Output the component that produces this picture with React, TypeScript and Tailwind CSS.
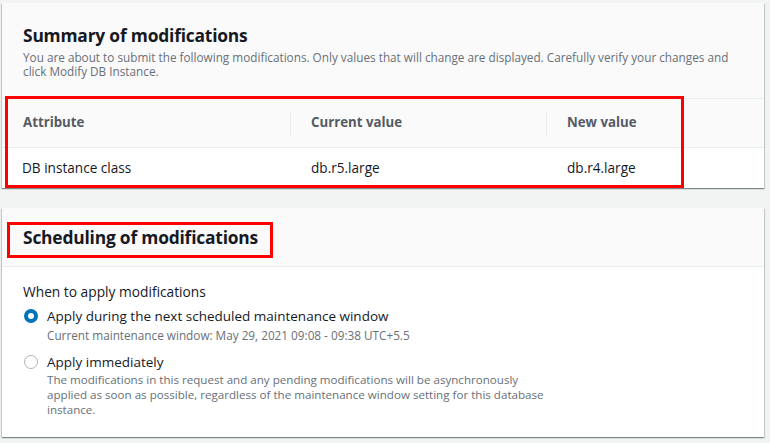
import React from 'react';

const font = { fontFamily: '"Open Sans", "Noto Sans", sans-serif' };

const columns = ['Attribute', 'Current value', 'New value'];
const rows = [['DB instance class', 'db.r5.large', 'db.r4.large']];

function Radio({ checked }: { checked: boolean }) {
  if (checked) {
    return <span className="mt-[2px] block h-[14px] w-[14px] shrink-0 rounded-full border-[4px] border-[#0073bb] bg-white" />;
  }
  return <span className="mt-[2px] block h-[14px] w-[14px] shrink-0 rounded-full border-[1.5px] border-[#aab7b8] bg-white" />;
}

export default function App() {
  return (
    <div className="min-h-[443px] bg-[#f2f3f3] pb-[5px] pl-[2px] pr-[6px] pt-[3px] text-[#16191f]" style={font}>
      <section className="relative bg-white shadow-[0_1px_1px_0_rgba(0,28,36,0.3),1px_1px_1px_0_rgba(0,28,36,0.15),-1px_1px_1px_0_rgba(0,28,36,0.15)]">
        <div className="bg-[#fafafa] px-[21px] pb-[20px] pt-[20px]">
          <h2 className="text-[17.4px] font-bold leading-[24px] tracking-[-0.2px]">Summary of modifications</h2>
          <p className="mt-[3px] text-[11.75px] leading-[14px] text-[#687078]">
            You are about to submit the following modifications. Only values that will change are displayed. Carefully verify your changes and click Modify DB Instance.
          </p>
        </div>
        <table className="w-full border-collapse">
          <thead>
            <tr className="border-t border-[#eaeded] bg-[#fafafa]">
              {columns.map((c, i) => (
                <th key={c} className={`h-[49px] p-0 text-left text-[13.25px] font-bold text-[#545b64] ${i === 0 ? 'w-[288px]' : i === 1 ? 'w-[256px]' : ''}`}>
                  <div className={`flex h-[24px] items-center ${i === 0 ? 'pl-[21px]' : 'border-l border-[#eaeded] pl-[20px]'}`}>{c}</div>
                </th>
              ))}
            </tr>
          </thead>
          <tbody>
            {rows.map((r) => (
              <tr key={r[0]} className="border-t border-[#eaeded]">
                {r.map((v, i) => (
                  <td key={i} className={`h-[40px] p-0 text-[13.6px] ${i === 0 ? 'pl-[20px]' : 'pl-[21px]'}`}>{v}</td>
                ))}
              </tr>
            ))}
          </tbody>
        </table>
        <div className="absolute left-[3px] top-[93px] h-[92px] w-[679px] border-[3px] border-[#ff0000]" />
      </section>

      <section className="relative mt-[20px] bg-white shadow-[0_1px_1px_0_rgba(0,28,36,0.3),1px_1px_1px_0_rgba(0,28,36,0.15),-1px_1px_1px_0_rgba(0,28,36,0.15)]">
        <div className="flex h-[59px] items-center border-b border-[#eaeded] bg-[#fafafa] px-[21px]">
          <h2 className="text-[17.4px] font-bold leading-[24px] tracking-[-0.2px]">Scheduling of modifications</h2>
        </div>
        <div className="absolute left-[5px] top-[14px] h-[36px] w-[266px] border-[3px] border-[#ff0000]" />
        <div className="px-[21px] pb-[20px] pt-[16px]">
          <div className="text-[13.75px] leading-[18px]">When to apply modifications</div>
          <div className="mt-[6px] flex gap-[9px] pl-[1px]">
            <Radio checked />
            <div>
              <div className="text-[13.5px] leading-[18px]">Apply during the next scheduled maintenance window</div>
              <div className="mt-[2px] text-[11.75px] leading-[16px] text-[#687078]">Current maintenance window: May 29, 2021 09:08 - 09:38 UTC+5.5</div>
            </div>
          </div>
          <div className="mt-[10px] flex gap-[9px] pl-[1px]">
            <Radio checked={false} />
            <div className="max-w-[505px]">
              <div className="text-[13.5px] leading-[18px]">Apply immediately</div>
              <div className="mt-[1px] text-[11.6px] leading-[15px] text-[#687078]">
                The modifications in this request and any pending modifications will be asynchronously applied as soon as possible, regardless of the maintenance window setting for this database instance.
              </div>
            </div>
          </div>
        </div>
      </section>
    </div>
  );
}
